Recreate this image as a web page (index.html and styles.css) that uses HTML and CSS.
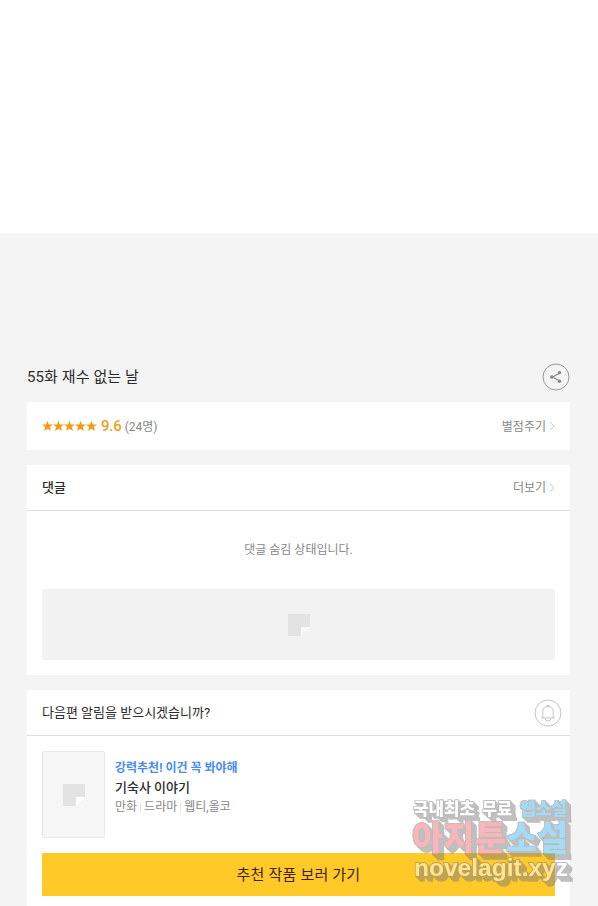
FILE: index.html
```html
<!DOCTYPE html>
<html lang="ko">
<head>
<meta charset="utf-8">
<title>55화 재수 없는 날</title>
<link rel="stylesheet" href="styles.css">
</head>
<body>
<div class="viewer"></div>
<main class="content">
  <header class="episode">
    <h1 class="episode-title">55화 재수 없는 날</h1>
    <svg class="round-icon" viewBox="0 0 28 28"><circle cx="14" cy="14" r="13" fill="none" stroke="#999"/><path d="M18 10 10.5 14 18 18" fill="none" stroke="#888" stroke-width="1.2"/><g fill="#888"><circle cx="17.5" cy="9.8" r="1.7"/><circle cx="9.8" cy="14" r="1.7"/><circle cx="17.5" cy="18.2" r="1.7"/></g></svg>
  </header>
  <section class="card rating">
    <svg class="stars" viewBox="0 0 55 12"><defs><path id="star" d="M5.5 .7 6.9 4.5 11 4.6 7.8 7.1 8.9 11 5.5 8.7 2.1 11 3.2 7.1 0 4.6 4.1 4.5z"/></defs><g fill="#f39b13"><use href="#star"/><use href="#star" x="11"/><use href="#star" x="22"/><use href="#star" x="33"/><use href="#star" x="44"/></g></svg>
    <span class="score">9.6</span>
    <span class="votes">(24명)</span>
    <a class="more"><span>별점주기</span><svg class="chevron" viewBox="0 0 6 10"><path d="M1 1 5 5 1 9"/></svg></a>
  </section>
  <section class="card comments">
    <div class="card-head">
      <h2 class="card-title strong">댓글</h2>
      <a class="more"><span>더보기</span><svg class="chevron" viewBox="0 0 6 10"><path d="M1 1 5 5 1 9"/></svg></a>
    </div>
    <p class="hidden-note">댓글 숨김 상태입니다.</p>
    <div class="banner"><svg class="placeholder" viewBox="0 0 22 22"><path d="M0 0H22V13H13V22H0z" fill="#e3e3e3"/><path d="M13 13H22L13 22z" fill="#f9f9f9"/></svg></div>
  </section>
  <section class="card next">
    <div class="card-head alarm">
      <h2 class="card-title">다음편 알림을 받으시겠습니까?</h2>
      <svg class="round-icon" viewBox="0 0 28 28"><g fill="none" stroke="#c4c4c4"><circle cx="14" cy="14" r="13"/><path d="M7 19H21M8.8 19V12.5Q8.8 8 14 7.5Q19.2 8 19.2 12.5V19M12.8 7.5V6.5H15.2V7.5M11 19.5Q11.5 22 14 22T17 19.5"/></g></svg>
    </div>
    <div class="work">
      <div class="cover"><svg class="placeholder" viewBox="0 0 22 22"><path d="M0 0H22V13H13V22H0z" fill="#e3e3e3"/><path d="M13 13H22L13 22z" fill="#fff"/></svg></div>
      <div class="info">
        <p class="recommend">강력추천! 이건 꼭 봐야해</p>
        <p class="work-title">기숙사 이야기</p>
        <p class="meta"><span>만화</span><i class="bar"></i><span>드라마</span><i class="bar"></i><span>웹티,올코</span></p>
      </div>
    </div>
    <a class="button">추천 작품 보러 가기</a>
  </section>
</main>
<svg class="watermark" viewBox="0 0 170 94">
  <defs>
    <g id="mark">
      <text class="w-small" x="4" y="21" textLength="62" lengthAdjust="spacingAndGlyphs">국내최초</text>
      <text class="w-small" x="73" y="21" textLength="30" lengthAdjust="spacingAndGlyphs">무료</text>
      <text class="w-small sky" x="111" y="21" textLength="47" lengthAdjust="spacingAndGlyphs">웹소설</text>
      <text class="w-large rose" x="3" y="57" textLength="94" lengthAdjust="spacingAndGlyphs">아지툰</text>
      <text class="w-large sky" x="97" y="57" textLength="62" lengthAdjust="spacingAndGlyphs">소설</text>
      <text class="w-url" x="5" y="82" textLength="154" lengthAdjust="spacingAndGlyphs">novelagit.xyz</text>
    </g>
    <filter id="extrude" x="-5%" y="-5%" width="115%" height="115%">
      <feMorphology in="SourceAlpha" operator="dilate" radius=".4" result="a"/>
      <feOffset in="a" dx="1" dy="1" result="b"/><feOffset in="a" dx="2" dy="2" result="c"/>
      <feOffset in="a" dx="3" dy="3" result="d"/><feOffset in="a" dx="4" dy="4" result="e"/>
      <feOffset in="a" dx="5" dy="5" result="f"/>
      <feMerge result="m"><feMergeNode in="a"/><feMergeNode in="b"/><feMergeNode in="c"/><feMergeNode in="d"/><feMergeNode in="e"/><feMergeNode in="f"/></feMerge>
      <feFlood class="depth"/><feComposite in2="m" operator="in" result="depth"/>
      <feMerge><feMergeNode in="depth"/><feMergeNode in="SourceGraphic"/></feMerge>
    </filter>
  </defs>
  <use href="#mark" filter="url(#extrude)"/>
</svg>
</body>
</html>
```
FILE: styles.css
```css
* { box-sizing: border-box; }
body { margin: 0; height: 906px; overflow: hidden; position: relative; background: #f4f4f4; color: #2b2b2b; font-family: Roboto, "Noto Sans CJK KR", sans-serif; }
h1, h2, p { margin: 0; font-weight: 400; }
.viewer { height: 233px; background: #fff; }
.content { width: 543px; margin: 0 27px; padding-top: 129px; }
.episode { height: 29px; display: flex; align-items: center; justify-content: space-between; }
.episode-title { font-size: 15px; line-height: 22px; letter-spacing: .1px; }
.round-icon { width: 28px; height: 28px; flex: none; display: block; }
.card { width: 543px; background: #fff; }
.rating { margin-top: 11px; height: 48px; padding: 0 15px; display: flex; align-items: center; }
.stars { width: 55px; height: 12px; }
.score { margin-left: 4px; font-size: 15px; letter-spacing: -.2px; font-weight: 500; color: #f0a01c; }
.votes { margin-left: 3px; margin-top: -2px; font-size: 12px; color: #888; }
.more { margin-left: auto; display: flex; align-items: center; gap: 3px; font-size: 12px; color: #888; }
.more span { margin-top: -2px; }
.chevron { width: 6px; height: 10px; fill: none; stroke: #ccc; }
.comments { margin-top: 15px; height: 210px; }
.card-head { height: 46px; padding: 0 15px; display: flex; align-items: center; border-bottom: 1px solid #dedede; }
.card-title { font-size: 13px; line-height: 20px; }
.strong { font-weight: 500; }
.hidden-note { padding-top: 30px; height: 78px; text-align: center; font-size: 12px; line-height: 18px; color: #888; }
.banner { height: 71px; margin: 0 15px; border-radius: 3px; background: #f2f2f2; display: flex; align-items: center; justify-content: center; }
.placeholder { width: 22px; height: 22px; }
.next { margin-top: 15px; height: 230px; }
.alarm { padding-right: 8px; justify-content: space-between; }
.work { display: flex; gap: 10px; padding: 15px 15px 0; }
.cover { width: 63px; height: 87px; border: 1px solid #e9e9e9; border-radius: 2px; background: #f6f6f6; display: flex; align-items: center; justify-content: center; }
.info { padding-top: 7px; }
.recommend { font-size: 12px; line-height: 20px; font-weight: 700; color: #4a8bf0; }
.work-title { font-size: 13px; line-height: 20px; font-weight: 500; }
.meta { display: flex; align-items: center; font-size: 12px; line-height: 18px; color: #888; }
.bar { width: 1px; height: 9px; margin: 0 3px; background: #e6e6e6; }
.button { margin: 15px 15px 0; padding-bottom: 3px; height: 43px; display: flex; align-items: center; justify-content: center; font-size: 15px; letter-spacing: .2px; background: #ffc928; color: #42210b; border-radius: 1px; }
.watermark { position: absolute; left: 409px; top: 794px; width: 170px; height: 94px; opacity: .5; }
.watermark .depth { flood-color: #808080; }
.watermark text { fill: #fff; stroke: #777; stroke-width: 1.4px; paint-order: stroke; font-family: "Noto Sans CJK KR", sans-serif; font-weight: 900; }
.watermark .w-small { font-size: 17px; }
.watermark .w-large { font-size: 35px; }
.watermark .w-url { font-family: "Liberation Sans", sans-serif; font-size: 24px; font-weight: 700; }
.watermark .sky { fill: #4cb8ee; }
.watermark .rose { fill: #f26d78; }
```
